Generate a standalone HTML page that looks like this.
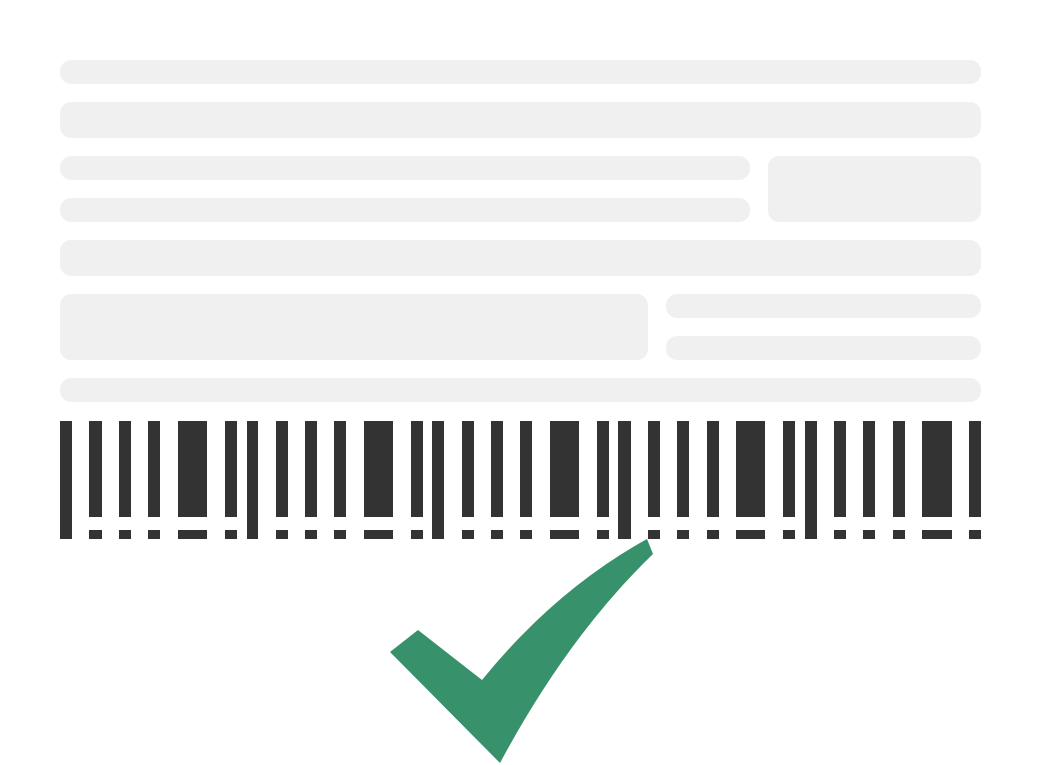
<!DOCTYPE html>
<html><head><meta charset="utf-8"><style>
html,body{margin:0;padding:0;background:#fff;width:1041px;height:765px;overflow:hidden;position:relative}
.r{position:absolute;background:#f0f0f0;border-radius:11px}
</style></head><body>
<div class="r" style="left:60px;top:60px;width:921px;height:24px"></div>
<div class="r" style="left:60px;top:102px;width:921px;height:36px"></div>
<div class="r" style="left:60px;top:156px;width:690px;height:24px"></div>
<div class="r" style="left:60px;top:198px;width:690px;height:24px"></div>
<div class="r" style="left:768px;top:156px;width:213px;height:66px"></div>
<div class="r" style="left:60px;top:240px;width:921px;height:36px"></div>
<div class="r" style="left:60px;top:294px;width:588px;height:66px"></div>
<div class="r" style="left:666px;top:294px;width:315px;height:24px"></div>
<div class="r" style="left:666px;top:336px;width:315px;height:24px"></div>
<div class="r" style="left:60px;top:378px;width:921px;height:24px"></div>
<svg width="1041" height="765" style="position:absolute;left:0;top:0">
<g fill="#333">
<rect x="60" y="421" width="12" height="118"/>
<rect x="247" y="421" width="11" height="118"/>
<rect x="432" y="421" width="12" height="118"/>
<rect x="618" y="421" width="13" height="118"/>
<rect x="805" y="421" width="12" height="118"/>
</g>
<g fill="#333">
<path d="M89 421h13v96h-13zM119 421h12v96h-12zM148 421h12v96h-12zM178 421h29v96h-29zM225 421h12v96h-12zM276 421h12v96h-12zM305 421h12v96h-12zM334 421h12v96h-12zM364 421h29v96h-29zM411 421h12v96h-12zM462 421h12v96h-12zM491 421h12v96h-12zM520 421h12v96h-12zM550 421h29v96h-29zM597 421h12v96h-12zM648 421h12v96h-12zM677 421h12v96h-12zM707 421h12v96h-12zM736 421h29v96h-29zM783 421h12v96h-12zM834 421h12v96h-12zM863 421h12v96h-12zM893 421h12v96h-12zM922 421h30v96h-30zM969 421h12v96h-12z"/>
<path d="M89 530h13v9h-13zM119 530h12v9h-12zM148 530h12v9h-12zM178 530h29v9h-29zM225 530h12v9h-12zM276 530h12v9h-12zM305 530h12v9h-12zM334 530h12v9h-12zM364 530h29v9h-29zM411 530h12v9h-12zM462 530h12v9h-12zM491 530h12v9h-12zM520 530h12v9h-12zM550 530h29v9h-29zM597 530h12v9h-12zM648 530h12v9h-12zM677 530h12v9h-12zM707 530h12v9h-12zM736 530h29v9h-29zM783 530h12v9h-12zM834 530h12v9h-12zM863 530h12v9h-12zM893 530h12v9h-12zM922 530h30v9h-30zM969 530h12v9h-12z"/>
</g>
<path fill="#37916b" d="M390 652 L418 630 L482 680 Q555 590 647 539 L653 554 Q568 636 500 763 Z"/>
</svg>
</body></html>
